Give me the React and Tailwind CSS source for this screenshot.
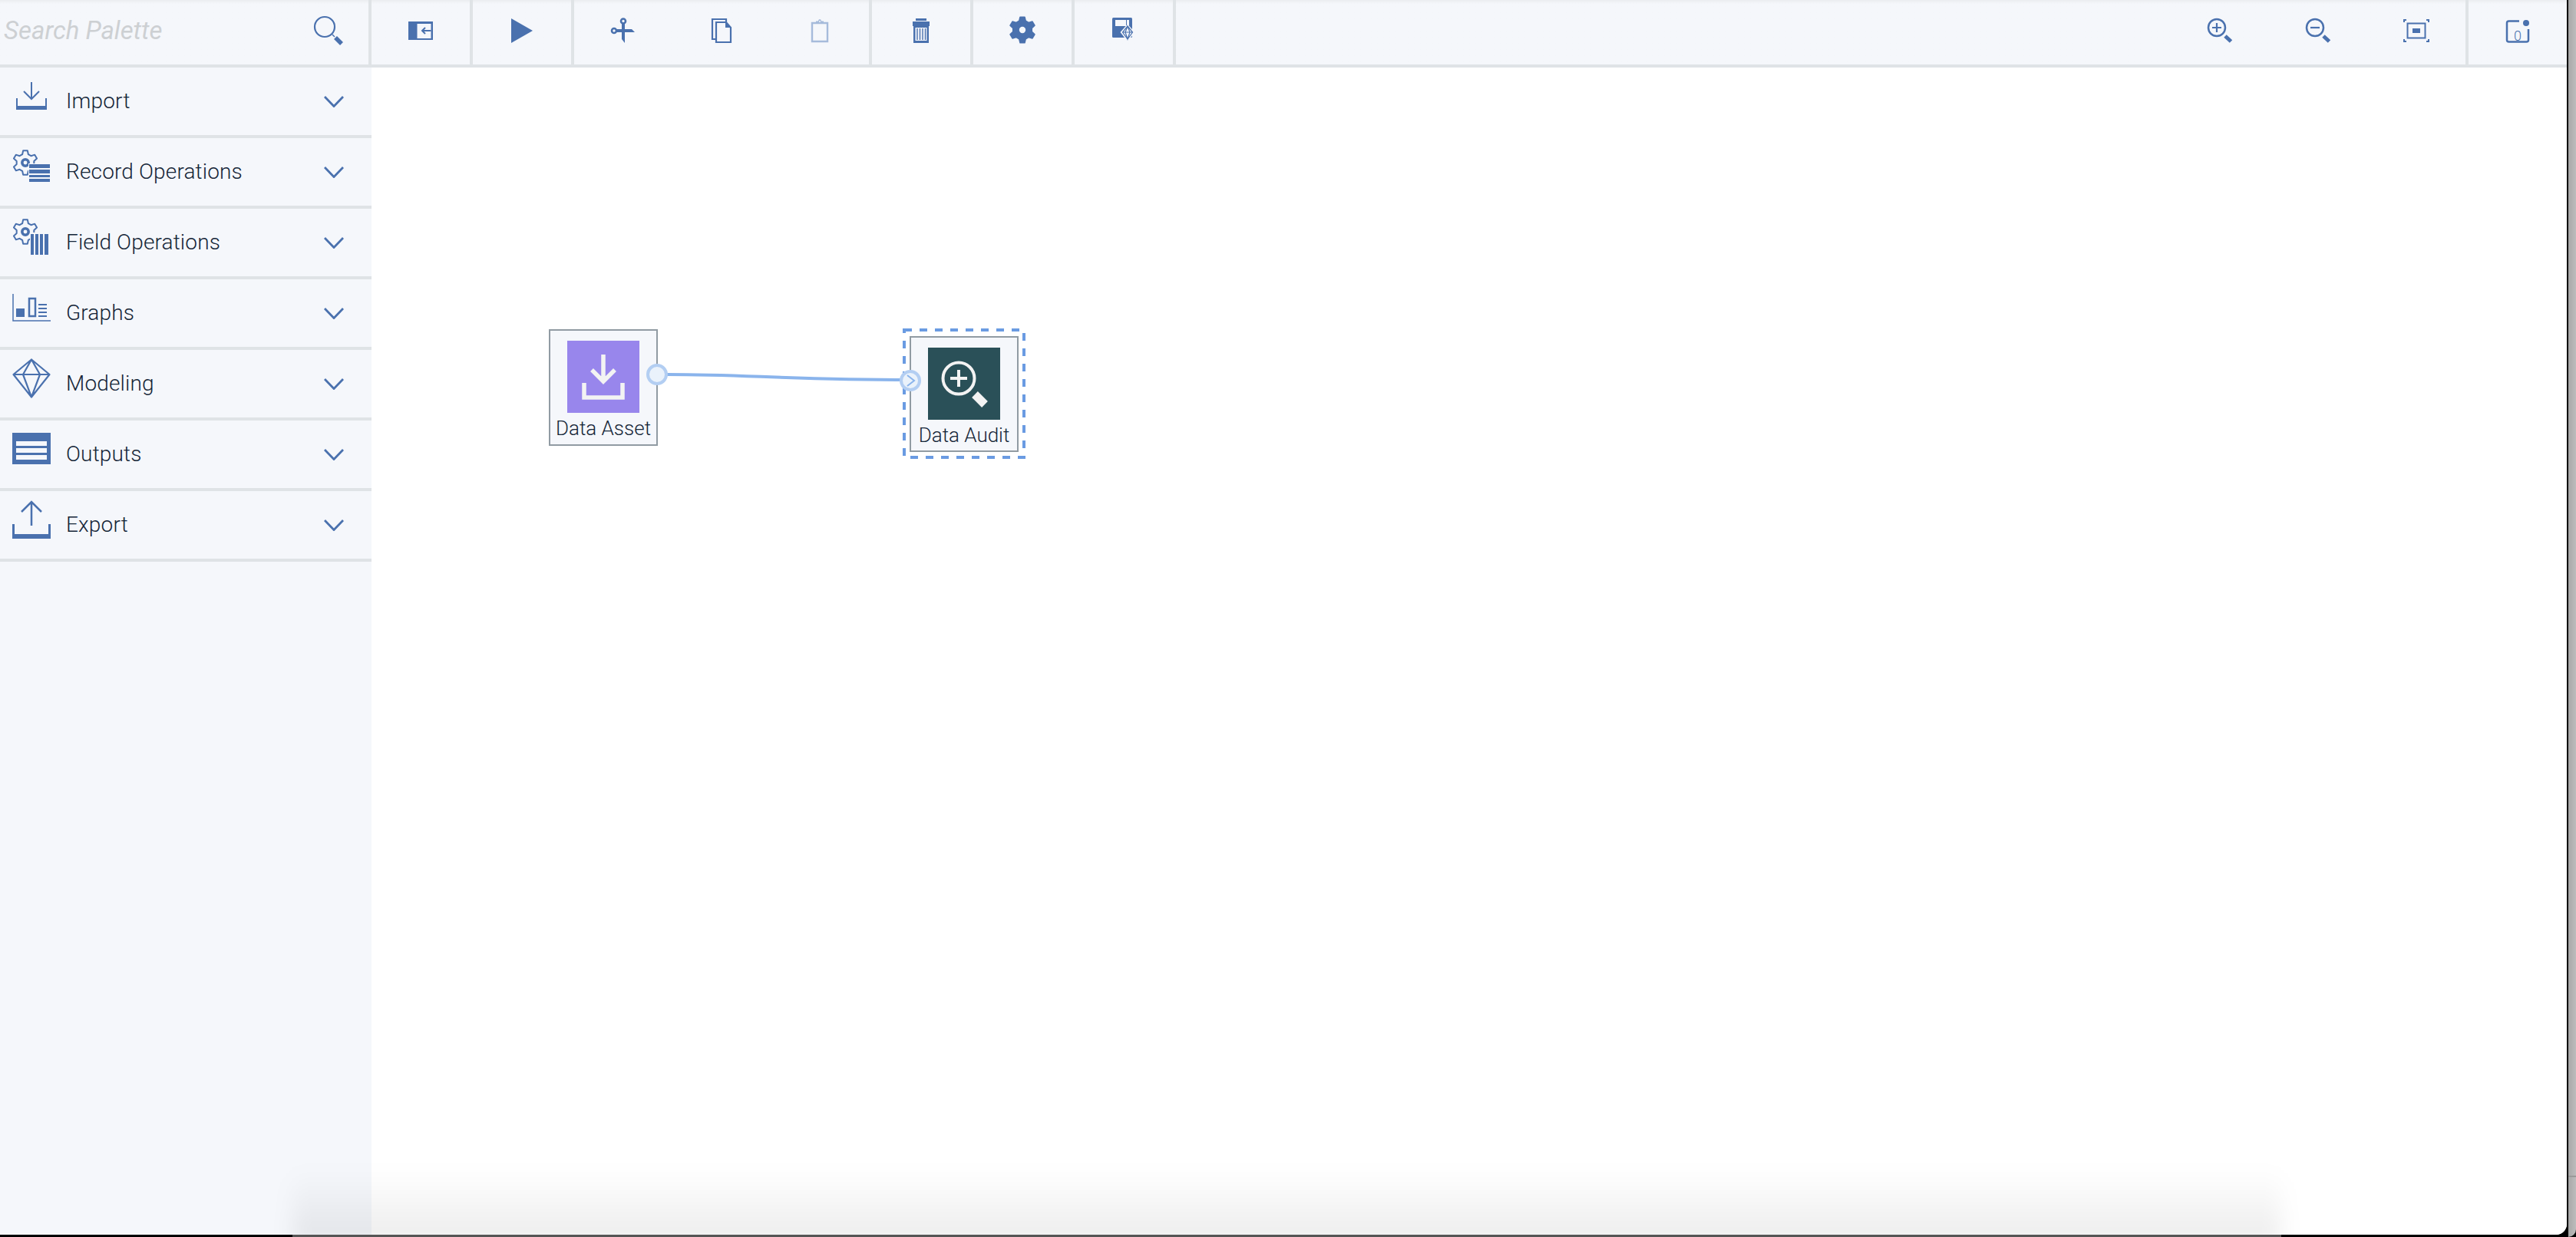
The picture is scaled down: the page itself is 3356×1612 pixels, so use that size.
import React from 'react'

const BLUE = '#4a71ae'
const FADED = '#a6bbdb'

// builds a cog outline, used by the palette icons and the settings button
function gearPath(cx, cy, outer, inner, teeth = 6) {
  const step = (Math.PI * 2) / teeth
  const pts = []
  for (let i = 0; i < teeth; i++) {
    const a = i * step - Math.PI / 2
    const w = step * 0.17
    const v = step * 0.33
    const add = (r, t) => pts.push(`${(cx + r * Math.cos(t)).toFixed(2)} ${(cy + r * Math.sin(t)).toFixed(2)}`)
    add(inner, a - v)
    add(outer, a - w)
    add(outer, a + w)
    add(inner, a + v)
  }
  return 'M' + pts.join('L') + 'Z'
}

function PaletteIcon({ children }) {
  return (
    <svg width="52" height="52" viewBox="0 0 52 52" className="mb-[14px] ml-[16px] shrink-0 overflow-visible">
      {children}
    </svg>
  )
}

function ToolIcon({ children, color = BLUE }) {
  return (
    <svg width="32" height="32" viewBox="0 0 32 32" className="mb-[4px] overflow-visible" style={{ color }}>
      {children}
    </svg>
  )
}

function OutlineGear({ cx, cy }) {
  return (
    <g>
      <path d={gearPath(cx, cy, 16, 11.5, 6)} fill="#f5f7fb" stroke={BLUE} strokeWidth="2" strokeLinejoin="round" />
      <circle cx={cx} cy={cy} r="4.2" fill="none" stroke={BLUE} strokeWidth="3.5" />
    </g>
  )
}

const paletteItems = [
  {
    label: 'Import',
    icon: (
      <PaletteIcon>
        <path d="M25 8V29M15 20L25 30L35 20" fill="none" stroke={BLUE} strokeWidth="2" />
        <path d="M6 29V43H44V29" fill="none" stroke={BLUE} strokeWidth="2" />
        <rect x="5" y="39" width="40" height="5" fill={BLUE} />
      </PaletteIcon>
    ),
  },
  {
    label: 'Record Operations',
    icon: (
      <PaletteIcon>
        <OutlineGear cx={17} cy={21} />
        <rect x="21" y="22" width="29" height="25" fill="#f5f7fb" />
        <rect x="22" y="23" width="27" height="5" fill={BLUE} />
        <rect x="22" y="30" width="27" height="5" fill={BLUE} />
        <rect x="22" y="37" width="27" height="3" fill={BLUE} />
        <rect x="22" y="42" width="27" height="4" fill={BLUE} />
      </PaletteIcon>
    ),
  },
  {
    label: 'Field Operations',
    icon: (
      <PaletteIcon>
        <OutlineGear cx={17} cy={19} />
        <rect x="23" y="20" width="25" height="29" fill="#f5f7fb" />
        <rect x="24" y="22" width="4" height="27" fill={BLUE} />
        <rect x="30" y="22" width="4" height="27" fill={BLUE} />
        <rect x="36" y="22" width="4" height="27" fill={BLUE} />
        <rect x="42" y="22" width="5" height="27" fill={BLUE} />
      </PaletteIcon>
    ),
  },
  {
    label: 'Graphs',
    icon: (
      <PaletteIcon>
        <path d="M1 8V43H50" fill="none" stroke={BLUE} strokeWidth="1.5" />
        <rect x="5" y="27" width="11" height="11" fill={BLUE} />
        <rect x="22" y="14" width="8" height="23" fill="none" stroke={BLUE} strokeWidth="2.5" />
        <path d="M34 22H45M34 27H45M34 32H45M34 37H45" stroke={BLUE} strokeWidth="2" />
      </PaletteIcon>
    ),
  },
  {
    label: 'Modeling',
    icon: (
      <PaletteIcon>
        <path
          d="M25 1.500L1.500 21L25 50.500L48.500 21ZM1.500 21H48.500M25 1.500L14 21L25 50.500L36 21Z"
          fill="none"
          stroke={BLUE}
          strokeWidth="2.200"
          strokeLinejoin="round"
        />
      </PaletteIcon>
    ),
  },
  {
    label: 'Outputs',
    icon: (
      <PaletteIcon>
        <rect x="0" y="5" width="50" height="41" fill={BLUE} />
        <rect x="5" y="16" width="40" height="6" fill="#f5f7fb" />
        <rect x="5" y="25" width="40" height="6" fill="#f5f7fb" />
        <rect x="5" y="34" width="40" height="6" fill="#f5f7fb" />
      </PaletteIcon>
    ),
  },
  {
    label: 'Export',
    icon: (
      <PaletteIcon>
        <path d="M25 3V34M12 16L25 3L38 16" fill="none" stroke={BLUE} strokeWidth="2.500" />
        <path d="M1.500 32V49H48.500V32" fill="none" stroke={BLUE} strokeWidth="3" />
        <rect x="0" y="45" width="50" height="6" fill={BLUE} />
      </PaletteIcon>
    ),
  },
]

function Chevron() {
  return (
    <svg width="26" height="15" viewBox="0 0 26 15" className="ml-auto mr-[36px] shrink-0">
      <path d="M1 1L13 13.500L25 1" fill="none" stroke={BLUE} strokeWidth="2.800" />
    </svg>
  )
}

function PaletteRow({ label, icon }) {
  return (
    <div className="flex h-[92px] items-center border-b-4 border-[#dfe3e6]">
      {icon}
      <span className="ml-[18px] text-[28px] font-light tracking-[0.15px] text-[#152638]">{label}</span>
      <Chevron />
    </div>
  )
}

function ToolCell({ children, className }) {
  return <div className={`flex h-full items-center justify-center ${className}`}>{children}</div>
}

function Toolbar() {
  return (
    <div className="flex h-[88px] border-b-4 border-[#dfe3e6] bg-linear-to-b from-[#ebedf0] to-[#f5f7fb] to-[6%]">
      <div className="flex w-[484px] shrink-0 items-center border-r-4 border-[#dfe3e6] pl-[5px]">
        <span className="mb-[5px] text-[33px] italic text-[#cdd0d3]">Search Palette</span>
        <svg width="40" height="40" viewBox="0 0 40 40" className="ml-auto mr-[32px] mb-[4px]">
          <circle cx="15" cy="15" r="13" fill="none" stroke={BLUE} strokeWidth="2.200" />
          <path d="M25 25L28 28" stroke={BLUE} strokeWidth="1.500" />
          <path d="M29 29L37 37" stroke={BLUE} strokeWidth="5.500" />
        </svg>
      </div>

      <ToolCell className="w-[132px] border-r-4 border-[#dfe3e6]">
        <ToolIcon>
          <rect x="0" y="4" width="32" height="24" fill={BLUE} />
          <rect x="11.500" y="7" width="18" height="19" fill="#f5f7fb" />
          <path d="M18 16H29.500M22 12L18 16L22 20" fill="none" stroke={BLUE} strokeWidth="2" />
        </ToolIcon>
      </ToolCell>
      <ToolCell className="w-[132px] border-r-4 border-[#dfe3e6]">
        <ToolIcon>
          <path d="M2 0L30 16L2 32Z" fill={BLUE} />
        </ToolIcon>
      </ToolCell>

      <div className="flex h-full w-[388px] border-r-4 border-[#dfe3e6]">
        <ToolCell className="w-[128px]">
          <ToolIcon>
            <circle cx="16" cy="3.500" r="3" fill="none" stroke={BLUE} strokeWidth="2.600" />
            <circle cx="4" cy="16" r="3" fill="none" stroke={BLUE} strokeWidth="2.600" />
            <path d="M14 6H18V32L14 27Z" fill={BLUE} />
            <path d="M7 14H27L31 18H7Z" fill={BLUE} />
          </ToolIcon>
        </ToolCell>
        <ToolCell className="w-[128px]">
          <ToolIcon>
            <path d="M8 27H4V1H22V5" fill="none" stroke={BLUE} strokeWidth="2.200" />
            <path d="M9 5H22L28 12V31H9Z" fill="#f5f7fb" stroke={BLUE} strokeWidth="2.200" />
            <path d="M21 5V12H28Z" fill={BLUE} />
          </ToolIcon>
        </ToolCell>
        <ToolCell className="w-[128px]">
          <ToolIcon>
            <path d="M6 6H26V30H6Z" fill="none" stroke={FADED} strokeWidth="2.400" />
            <path d="M11 7V3.500H14A2 2.500 0 0 1 18 3.500H21V7Z" fill={FADED} />
            <circle cx="16" cy="4" r="1" fill="#f5f7fb" />
          </ToolIcon>
        </ToolCell>
      </div>

      <ToolCell className="w-[132px] border-r-4 border-[#dfe3e6]">
        <ToolIcon>
          <rect x="9" y="0" width="14" height="3" fill={BLUE} />
          <rect x="5" y="4" width="22" height="6" fill={BLUE} />
          <rect x="6" y="9" width="20" height="23" fill={BLUE} />
          <rect x="8.500" y="12" width="15" height="17" fill="#f5f7fb" />
          <path d="M11 13V28M14.500 13V28M18 13V28M21.500 13V28" stroke={BLUE} strokeWidth="1.400" />
        </ToolIcon>
      </ToolCell>
      <ToolCell className="w-[132px] border-r-4 border-[#dfe3e6]">
        <ToolIcon>
          <path
            d={gearPath(16, 15, 17, 12.5, 6)}
            fill={BLUE}
            stroke={BLUE}
            strokeWidth="1.500"
            strokeLinejoin="round"
          />
          <circle cx="16" cy="15" r="4.200" fill="#f5f7fb" />
        </ToolIcon>
      </ToolCell>
      <ToolCell className="w-[132px] border-r-4 border-[#dfe3e6]">
        <ToolIcon>
          <rect x="1" y="-1" width="26" height="26" rx="1.500" fill={BLUE} />
          <rect x="5" y="2" width="14" height="8" fill="#f5f7fb" />
          <rect x="20" y="2" width="3" height="8" fill="#f5f7fb" />
          <path d="M21 7.500L30.500 18L21 30L11.500 18Z" fill="#f5f7fb" />
          <path
            d="M21 10L27.500 18L21 27L14.500 18ZM14.500 18H27.500M21 10L18 18L21 27L24 18Z"
            fill="none"
            stroke={BLUE}
            strokeWidth="1.200"
          />
        </ToolIcon>
      </ToolCell>

      {/* zoom controls on the right */}
      <div className="ml-auto flex h-full">
        <ToolCell className="w-[128px]">
          <ToolIcon>
            <circle cx="12" cy="12" r="11" fill="none" stroke={BLUE} strokeWidth="2.500" />
            <path d="M12 6V18M6 12H18" stroke={BLUE} strokeWidth="2.200" />
            <path d="M23 23L30.500 30" stroke={BLUE} strokeWidth="5" />
          </ToolIcon>
        </ToolCell>
        <ToolCell className="w-[128px]">
          <ToolIcon>
            <circle cx="12" cy="12" r="11" fill="none" stroke={BLUE} strokeWidth="2.500" />
            <path d="M6 12H18" stroke={BLUE} strokeWidth="2.200" />
            <path d="M23 23L30.500 30" stroke={BLUE} strokeWidth="5" />
          </ToolIcon>
        </ToolCell>
        <ToolCell className="w-[132px] border-r-4 border-[#dfe3e6]">
          <ToolIcon>
            <path
              d="M0 5V2H3M29 2H32V5M0 27V30H3M29 30H32V27"
              fill="none"
              stroke={BLUE}
              strokeWidth="2"
            />
            <rect x="4.500" y="6.500" width="23" height="19" fill="none" stroke={BLUE} strokeWidth="2" />
            <rect x="11" y="13" width="10" height="6" fill={BLUE} />
          </ToolIcon>
        </ToolCell>
        <ToolCell className="w-[128px]">
          <ToolIcon>
            <path
              d="M18 3.500H4.500A2.500 2.500 0 0 0 2 6V28A2.500 2.500 0 0 0 4.500 30.500H27.500A2.500 2.500 0 0 0 30 28V14"
              fill="none"
              stroke={BLUE}
              strokeWidth="2.500"
            />
            <circle cx="27" cy="6" r="4" fill={BLUE} />
            <text x="16" y="29" textAnchor="middle" fontSize="18" fontWeight="300" fill={BLUE}>
              0
            </text>
          </ToolIcon>
        </ToolCell>
      </div>
    </div>
  )
}

function Sidebar() {
  return (
    <aside className="h-full w-[484px] shrink-0 bg-[#f5f7fb]">
      {paletteItems.map((item) => (
        <PaletteRow key={item.label} label={item.label} icon={item.icon} />
      ))}
    </aside>
  )
}

function Node({ label, iconBg, children, className }) {
  return (
    <div
      className={`absolute flex w-[142px] flex-col items-center border-2 border-[#919ba3] bg-[#f5f7fb] pt-[13px] ${className}`}
    >
      <div className={`flex h-[94px] w-[94px] items-center justify-center ${iconBg}`}>{children}</div>
      <span className="mt-[4px] whitespace-nowrap text-[26px] font-light leading-[32px] text-[#152638]">{label}</span>
    </div>
  )
}

function Canvas() {
  return (
    <div className="relative h-full flex-1 bg-white">
      <Node label="Data Asset" iconBg="bg-[#9886ec]" className="left-[231px] top-[341px] h-[152px]">
        <svg width="56" height="60" viewBox="0 0 56 60">
          <path d="M28 1V36M13 21L28 36L43 21" fill="none" stroke="#f3f3f3" strokeWidth="5.500" />
          <path d="M3 38V57H53V38" fill="none" stroke="#f3f3f3" strokeWidth="5.500" />
        </svg>
      </Node>

      {/* selection outline around the audit node */}
      <svg width="162" height="172" viewBox="0 0 162 172" className="absolute left-[691px] top-[339px]">
        <rect
          x="3"
          y="3"
          width="156"
          height="166"
          fill="none"
          stroke="#6a9be2"
          strokeWidth="4"
          strokeDasharray="10 10"
        />
      </svg>
      <Node label="Data Audit" iconBg="bg-[#2a5058]" className="left-[701px] top-[350px] h-[151px]">
        <svg width="62" height="62" viewBox="0 0 62 62">
          <circle cx="24" cy="24" r="20.500" fill="none" stroke="#f3f3f3" strokeWidth="4" />
          <path d="M24 13V35M13 24H35" stroke="#f3f3f3" strokeWidth="4" />
          <path d="M45 45L58 58" stroke="#f3f3f3" strokeWidth="11" />
        </svg>
      </Node>

      {/* connection and its two ports */}
      <svg width="360" height="60" viewBox="0 0 360 60" className="absolute left-[358px] top-[380px] overflow-visible">
        <path d="M14 20C120 19 180 27 345 27" fill="none" stroke="#8ab4ec" strokeWidth="4" />
        <circle cx="14" cy="20" r="12" fill="#eaf2fb" stroke="#b3cef2" strokeWidth="4" />
        <circle cx="344" cy="28" r="12" fill="#eaf2fb" stroke="#b3cef2" strokeWidth="4" />
        <path d="M340 21L349 28L340 35" fill="none" stroke="#8ab4ec" strokeWidth="2" />
      </svg>
    </div>
  )
}

export default function App() {
  return (
    <div
      className="relative flex h-[1612px] w-full overflow-hidden bg-black"
      style={{ fontFamily: 'Roboto, "Liberation Sans", sans-serif' }}
    >
      <div className="relative flex h-[1609px] w-[3344px] shrink-0 flex-col overflow-hidden rounded-br-[14px] bg-white">
        <Toolbar />
        <div className="flex min-h-0 flex-1">
          <Sidebar />
          <Canvas />
        </div>
        <div className="pointer-events-none absolute bottom-[-14px] left-[381px] h-[100px] w-[2591px] bg-linear-to-b from-transparent to-[#00000014] blur-[14px]" />
      </div>
      <div className="ml-[2px] h-full flex-1 rounded-br-[10px] bg-linear-to-r from-[#a8a8a8] to-[#bcbcbc]">
        <div className="mt-[1532px] h-[2px] bg-[#999999]" />
      </div>
      <div className="absolute bottom-0 left-[381px] h-[3px] w-[2591px] bg-[#555555]" />
    </div>
  )
}
